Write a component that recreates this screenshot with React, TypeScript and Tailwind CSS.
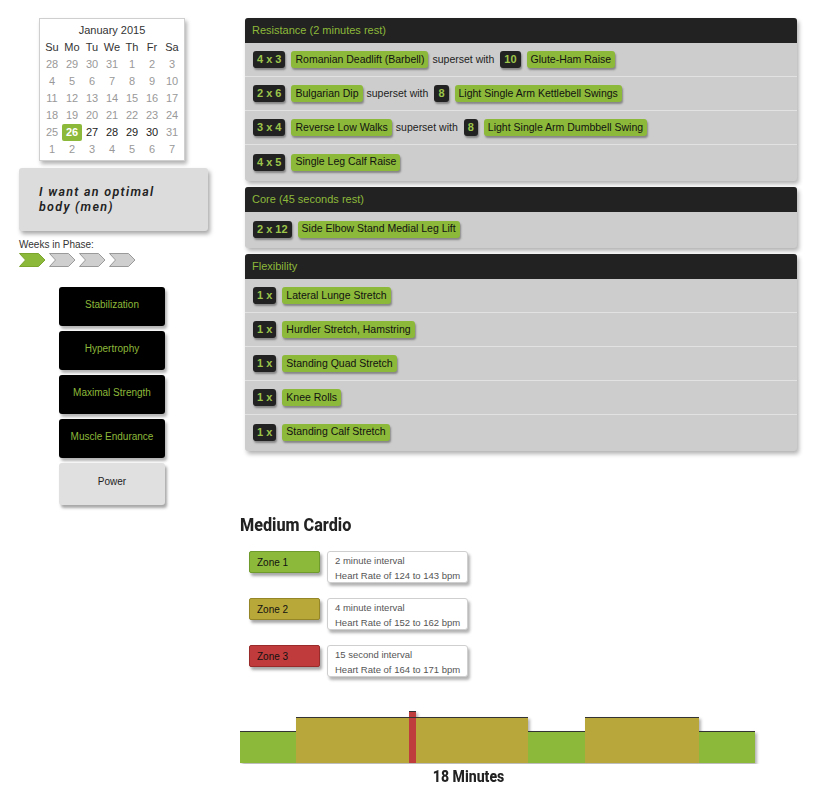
import React from 'react';

const sans = { fontFamily: '"Liberation Sans", Arial, sans-serif' };

type Row = { sets: string; name: string; reps?: string; other?: string };

const resistance: Row[] = [
  { sets: '4 x 3', name: 'Romanian Deadlift (Barbell)', reps: '10', other: 'Glute-Ham Raise' },
  { sets: '2 x 6', name: 'Bulgarian Dip', reps: '8', other: 'Light Single Arm Kettlebell Swings' },
  { sets: '3 x 4', name: 'Reverse Low Walks', reps: '8', other: 'Light Single Arm Dumbbell Swing' },
  { sets: '4 x 5', name: 'Single Leg Calf Raise' },
];
const core: Row[] = [{ sets: '2 x 12', name: 'Side Elbow Stand Medial Leg Lift' }];
const flex: Row[] = [
  { sets: '1 x', name: 'Lateral Lunge Stretch' },
  { sets: '1 x', name: 'Hurdler Stretch, Hamstring' },
  { sets: '1 x', name: 'Standing Quad Stretch' },
  { sets: '1 x', name: 'Knee Rolls' },
  { sets: '1 x', name: 'Standing Calf Stretch' },
];

const weeks = [
  [28, 29, 30, 31, 1, 2, 3],
  [4, 5, 6, 7, 8, 9, 10],
  [11, 12, 13, 14, 15, 16, 17],
  [18, 19, 20, 21, 22, 23, 24],
  [25, 26, 27, 28, 29, 30, 31],
  [1, 2, 3, 4, 5, 6, 7],
];

const Dark = ({ children }: { children: React.ReactNode }) => (
  <span className="inline-flex items-center h-[17px] px-[4px] rounded-[3px] bg-[#222] text-[#9dc54a] text-[11px] font-bold shadow-[1px_2px_2px_rgba(0,0,0,0.35)]">
    {children}
  </span>
);

const Green = ({ children }: { children: React.ReactNode }) => (
  <span className="inline-flex items-center h-[17px] px-[4px] rounded-[3px] bg-[#8db93a] text-[#111] text-[10.5px] shadow-[1px_2px_2px_rgba(0,0,0,0.35)]">
    {children}
  </span>
);

const Panel = ({ title, rows, mb }: { title: string; rows: Row[]; mb: string }) => (
  <div className={`rounded-[3px] overflow-hidden bg-[#cdcdcd] pb-[2px] shadow-[2px_3px_4px_rgba(0,0,0,0.3)] ${mb}`}>
    <div className="h-[25px] bg-[#222] text-[#8db93a] text-[11px] flex items-center pl-[7px]">{title}</div>
    {rows.map((r, i) => (
      <div
        key={i}
        className={`h-[34px] flex items-center gap-[6px] pl-[8px] ${i < rows.length - 1 ? 'border-b border-[#e2e2e2]' : ''}`}
      >
        <Dark>{r.sets}</Dark>
        <Green>{r.name}</Green>
        {r.reps && (
          <>
            <span className="text-[10.5px] text-[#222] -ml-[2px]">superset with</span>
            <Dark>{r.reps}</Dark>
            <Green>{r.other}</Green>
          </>
        )}
      </div>
    ))}
  </div>
);

const Chevron = ({ active }: { active?: boolean }) => (
  <svg width="27" height="14" viewBox="0 0 27 14">
    <polygon
      points="0.5,0.5 19.5,0.5 26,7 19.5,13.5 0.5,13.5 6.5,7"
      fill={active ? '#8db93a' : '#cfcfcf'}
      stroke={active ? '#7ca52e' : '#9a9a9a'}
      strokeWidth="1"
    />
  </svg>
);

const phases = ['Stabilization', 'Hypertrophy', 'Maximal Strength', 'Muscle Endurance'];

const zones = [
  { name: 'Zone 1', bg: 'bg-[#8db93a] border-[#6f9a2c]', a: '2 minute interval', b: 'Heart Rate of 124 to 143 bpm' },
  { name: 'Zone 2', bg: 'bg-[#b8a83a] border-[#958628]', a: '4 minute interval', b: 'Heart Rate of 152 to 162 bpm' },
  { name: 'Zone 3', bg: 'bg-[#c03c3c] border-[#9a2b2b]', a: '15 second interval', b: 'Heart Rate of 164 to 171 bpm' },
];

export default function App() {
  return (
    <div className="w-[813px] min-h-[795px] bg-white text-[#222]" style={sans}>
      <div className="flex">
        {/* left column */}
        <div className="w-[245px] shrink-0">
          <div className="ml-[39px] mt-[18px] w-[146px] h-[143px] bg-white border border-[#cfcfcf] shadow-[2px_3px_4px_rgba(0,0,0,0.3)] px-[2px] pt-[3px] text-[11px]">
            <div className="h-[17px] text-center text-[#333]">January 2015</div>
            <div className="grid grid-cols-7 text-[#333]">
              {['Su', 'Mo', 'Tu', 'We', 'Th', 'Fr', 'Sa'].map((d) => (
                <div key={d} className="h-[17px] flex items-center justify-center">{d}</div>
              ))}
              {weeks.map((w, wi) =>
                w.map((d, di) => {
                  const isSel = wi === 4 && d === 26;
                  const active = wi === 4 && d >= 27 && d <= 30;
                  return (
                    <div key={`${wi}-${di}`} className="h-[17px] flex items-center justify-center">
                      {isSel ? (
                        <span className="w-[20px] h-[17px] flex items-center justify-center bg-[#8db93a] text-white font-bold rounded-[2px]">
                          {d}
                        </span>
                      ) : (
                        <span className={active ? 'text-[#222]' : 'text-[#999]'}>{d}</span>
                      )}
                    </div>
                  );
                })
              )}
            </div>
          </div>

          <div className="ml-[19px] mt-[7px] w-[189px] h-[63px] bg-[#dcdcdc] rounded-[3px] shadow-[2px_3px_4px_rgba(0,0,0,0.35)] pl-[20px] pt-[16px]">
            <div
              className="italic font-semibold text-[12.5px] leading-[15px] tracking-[1.3px] text-[#222]"
              style={{ fontFamily: 'Roboto, "DejaVu Sans", sans-serif' }}
            >
              <div>I want an optimal</div>
              <div>body (men)</div>
            </div>
          </div>

          <div className="ml-[19px] mt-[8px] text-[10px] text-[#333] leading-[12px]">Weeks in Phase:</div>
          <div className="ml-[19px] mt-[2px] flex gap-[3px]">
            <Chevron active />
            <Chevron />
            <Chevron />
            <Chevron />
          </div>

          <div className="ml-[59px] mt-[20px] w-[106px] flex flex-col gap-[5px]">
            {phases.map((p) => (
              <div
                key={p}
                className="h-[39px] bg-black rounded-[3px] text-[#8db93a] text-[10px] text-center pt-[10px] shadow-[2px_3px_3px_rgba(0,0,0,0.3)]"
              >
                {p}
              </div>
            ))}
            <div className="h-[42px] bg-[#e0e0e0] rounded-[3px] text-[#222] text-[10px] text-center pt-[11px] shadow-[2px_3px_3px_rgba(0,0,0,0.35)]">
              Power
            </div>
          </div>
        </div>

        {/* right column */}
        <div className="w-[552px] mt-[18px]">
          <Panel title="Resistance (2 minutes rest)" rows={resistance} mb="mb-[6px]" />
          <Panel title="Core (45 seconds rest)" rows={core} mb="mb-[6px]" />
          <Panel title="Flexibility" rows={flex} mb="" />
        </div>
      </div>

      {/* cardio */}
      <div className="ml-[240px] mt-[9px]">
        <div
          className="text-[18px] font-extrabold leading-[22px] text-[#222] scale-x-[0.9] origin-left"
          style={{ fontFamily: 'Roboto, "Liberation Sans", sans-serif' }}
        >
          Medium Cardio
        </div>
        <div className="mt-[15px] ml-[9px] flex flex-col gap-[15px]">
          {zones.map((z) => (
            <div key={z.name} className="flex items-start gap-[7px]">
              <div
                className={`w-[71px] h-[22px] rounded-[2px] border ${z.bg} text-[10px] text-[#111] flex items-center pl-[7px] shadow-[2px_3px_3px_rgba(0,0,0,0.35)]`}
              >
                {z.name}
              </div>
              <div className="w-[141px] h-[32px] bg-white border border-[#cfcfcf] rounded-[3px] shadow-[2px_3px_3px_rgba(0,0,0,0.3)] pl-[7px] pt-[1px] text-[9.5px] text-[#555] leading-[15px]">
                <div>{z.a}</div>
                <div>{z.b}</div>
              </div>
            </div>
          ))}
        </div>

        <div className="mt-[34px] w-[520px]">
          <svg width="520" height="53" viewBox="0 0 520 53" className="block">
            <defs>
              <filter id="sh" x="-5%" y="-20%" width="115%" height="140%">
                <feDropShadow dx="2" dy="2" stdDeviation="1.5" floodColor="#000" floodOpacity="0.3" />
              </filter>
            </defs>
            <g filter="url(#sh)">
              <rect x="0" y="20" width="56" height="32" fill="#8db93a" />
              <rect x="56" y="6" width="232" height="46" fill="#b8a83a" />
              <rect x="288" y="20" width="57" height="32" fill="#8db93a" />
              <rect x="345" y="6" width="114" height="46" fill="#b8a83a" />
              <rect x="459" y="20" width="56" height="32" fill="#8db93a" />
              <rect x="169" y="0" width="7" height="52" fill="#c03c3c" />
            </g>
            <line x1="0" y1="20.5" x2="56" y2="20.5" stroke="#333" strokeWidth="1" />
            <line x1="56" y1="6.5" x2="288" y2="6.5" stroke="#333" strokeWidth="1" />
            <line x1="288" y1="20.5" x2="345" y2="20.5" stroke="#333" strokeWidth="1" />
            <line x1="345" y1="6.5" x2="459" y2="6.5" stroke="#333" strokeWidth="1" />
            <line x1="459" y1="20.5" x2="515" y2="20.5" stroke="#333" strokeWidth="1" />
            <line x1="169" y1="0.5" x2="176" y2="0.5" stroke="#333" strokeWidth="1" />
          </svg>
          <div
            className="w-[458px] mt-[3px] text-center text-[16px] font-extrabold leading-[20px] text-[#222]"
            style={{ fontFamily: 'Roboto, "Liberation Sans", sans-serif' }}
          >
            <span className="inline-block scale-x-[0.88]">18 Minutes</span>
          </div>
        </div>
      </div>
    </div>
  );
}
